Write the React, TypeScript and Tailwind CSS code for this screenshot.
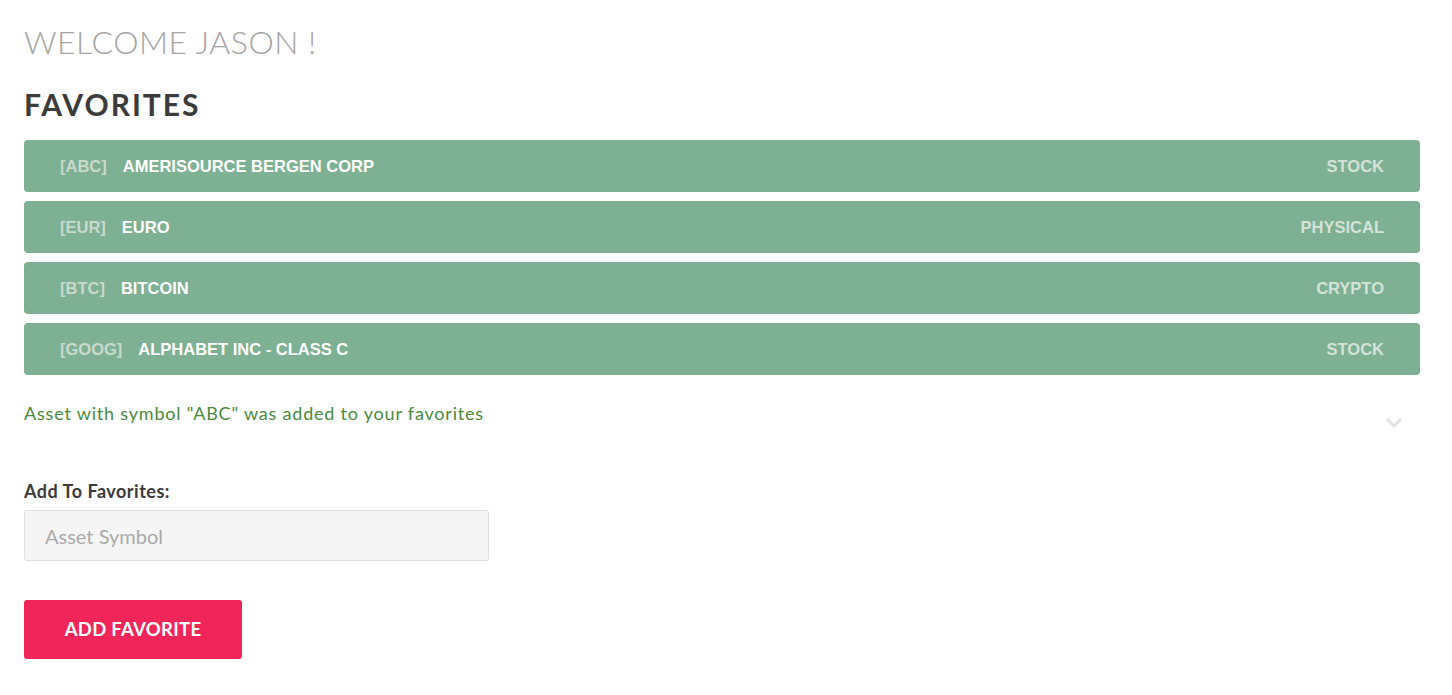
const favorites = [
  { symbol: 'ABC', name: 'AMERISOURCE BERGEN CORP', type: 'STOCK' },
  { symbol: 'EUR', name: 'EURO', type: 'PHYSICAL' },
  { symbol: 'BTC', name: 'BITCOIN', type: 'CRYPTO' },
  { symbol: 'GOOG', name: 'ALPHABET INC - CLASS C', type: 'STOCK' },
];

const FavoriteRow = ({ symbol, name, type }: { symbol: string; name: string; type: string }) => (
  <div className="flex h-[52px] items-center justify-between rounded-[4px] bg-[#7eb093] pl-9 pr-9 font-['Liberation_Sans',Arial,sans-serif] text-[16.5px] font-bold">
    <div className="flex items-center gap-[16px]">
      <span className="text-[#c9d9cc]">[{symbol}]</span>
      <span className="text-white">{name}</span>
    </div>
    <span className="text-[#d5e2d8]">{type}</span>
  </div>
);

export default function App() {
  return (
    <div className="min-h-screen bg-white pl-6 pr-8 pt-[22px] font-['Lato','Open_Sans',sans-serif]">
      <h1 className="text-[32px] font-light leading-[40px] text-[#a4a4a4] tracking-[0.5px]">WELCOME JASON !</h1>

      <h2 className="mt-[24px] text-[30px] font-bold leading-[36px] tracking-[2px] text-[#3b3b3b]">FAVORITES</h2>

      <div className="mt-[18px] flex flex-col gap-[9px]">
        {favorites.map((f) => (
          <FavoriteRow key={f.symbol} {...f} />
        ))}
      </div>

      <div className="mt-[26px] flex items-start justify-between">
        <p className="text-[18px] leading-[24px] tracking-[0.8px] text-[#4b8a3c]">Asset with symbol "ABC" was added to your favorites</p>
        <svg className="mr-[17px] mt-[16px]" width="18" height="12" viewBox="0 0 18 12" fill="none">
          <path d="M2 2l7 7 7-7" stroke="#e2e2e2" strokeWidth="3" />
        </svg>
      </div>

      <label className="mt-[51px] block text-[18px] font-bold leading-[22px] tracking-[0.5px] text-[#3b3b3b]">Add To Favorites:</label>
      <input
        placeholder="Asset Symbol"
        className="mt-[8px] block h-[51px] w-[465px] rounded-[3px] border border-[#dedede] bg-[#f5f5f5] px-5 text-[20px] text-[#555] placeholder:text-[#aaaaaa] outline-none"
      />

      <button className="mt-[39px] h-[59px] w-[218px] rounded-[3px] bg-[#f1255a] text-[18.5px] font-bold tracking-[0.3px] text-white">
        ADD FAVORITE
      </button>
    </div>
  );
}
